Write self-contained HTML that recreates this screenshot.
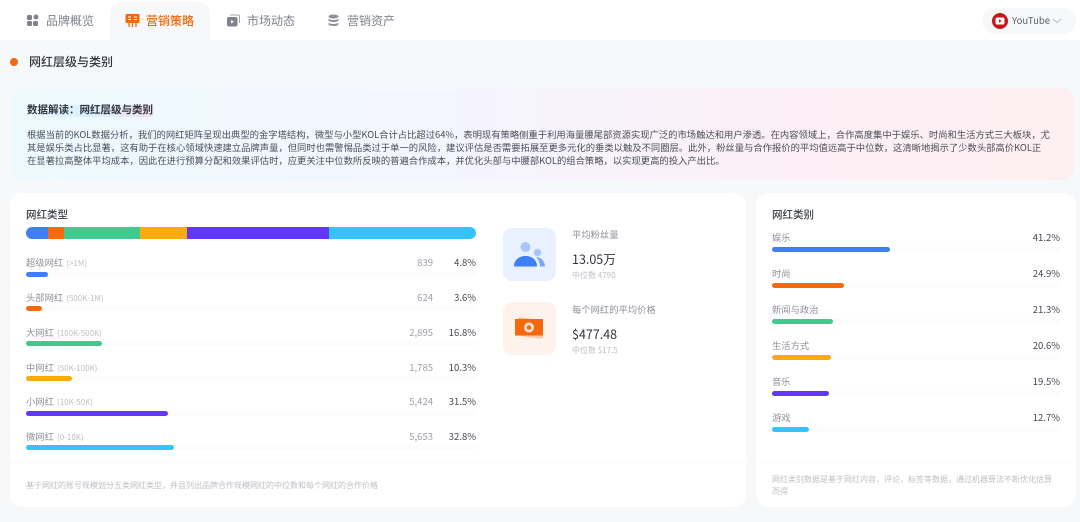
<!DOCTYPE html>
<html lang="zh"><head><meta charset="utf-8"><title>网红层级与类别</title>
<style>
*{box-sizing:border-box;margin:0;padding:0}
html,body{width:1080px;height:522px;overflow:hidden;background:#f7f8fa}
body{position:relative;font-family:"Noto Sans CJK SC","Liberation Sans",sans-serif;color:#3b3f4a;filter:blur(.3px)}
.a{position:absolute;white-space:nowrap;line-height:1}
.top{position:absolute;left:0;top:0;width:1080px;height:40px;background:#fff}
.tab{font-size:12px;color:#7d828c;top:15px}
.card{position:absolute;top:193px;height:314px;background:#fff;border-radius:12px}
.bar{position:absolute;height:5px;border-radius:3px}
.track{position:absolute;height:5px;background:#fbfcfd;border-radius:3px}
.lb{font-size:9.300px;color:#8d9199}
.lb small{font-size:8px;color:#bcbfc5;margin-left:1px}
.n{font-size:9.500px;color:#9a9ea6;text-align:right;width:50px}
.p{font-size:9.500px;color:#43474f;text-align:right;width:50px}
.seg{position:absolute;height:12px}
.hl{font-size:10.500px;color:#3b3f47;font-weight:500}
.s1{font-size:9.300px;color:#8d9199}
.s2{font-size:12.500px;color:#2f333b}
.s3{font-size:8px;color:#bcbfc5}
.foot{font-size:8px;color:#bdc0c5}
.t{font-size:9.320px;color:#4a4e57}
</style></head><body>
<div class="top"></div>
<div class="a" style="left:110px;top:2px;width:100px;height:38px;background:#f7f8fa;border-radius:12px 12px 0 0"></div>
<svg class="a" style="left:26px;top:14px" width="13" height="13" viewBox="0 0 13 13" fill="#7d828c"><rect x="1" y="1" width="5" height="5" rx="1.500"/><rect x="7.500" y="0.500" width="5" height="5" rx="2.500"/><rect x="1" y="7" width="5" height="5" rx="1.500"/><rect x="7" y="7" width="5" height="5" rx="1.500"/></svg>
<div class="a tab" style="left:46px">品牌概览</div>
<svg class="a" style="left:125px;top:13px" width="15" height="15" viewBox="0 0 15 15"><path d="M2 1h11a1.500 1.500 0 0 1 1.500 1.500v6A1.500 1.500 0 0 1 13 10H2A1.500 1.500 0 0 1 .5 8.500v-6A1.500 1.500 0 0 1 2 1z" fill="#f26a0f"/><path d="M3 4h3M9 4h3M3 6.500h3M9 6.500h3" stroke="#fff" stroke-width="1"/><path d="M4 10v4M7.500 10v4M11 10v4" stroke="#f26a0f" stroke-width="1.300"/></svg>
<div class="a tab" style="left:146px;color:#f06a0c;font-weight:500">营销策略</div>
<svg class="a" style="left:226px;top:14px" width="14" height="13" viewBox="0 0 14 13"><path d="M4 1h8a1.500 1.500 0 0 1 1.500 1.500V9" fill="none" stroke="#a3a6ad" stroke-width="1"/><rect x="1" y="3" width="10.500" height="9.500" rx="2" fill="#7d828c"/><path d="M5 6l3 1.800L5 9.500z" fill="#fff"/></svg>
<div class="a tab" style="left:247px">市场动态</div>
<svg class="a" style="left:327px;top:14px" width="13" height="13" viewBox="0 0 13 13" fill="#8d9098"><ellipse cx="6.500" cy="2.500" rx="5" ry="2"/><path d="M1.500 4.500c1 2 9 2 10 0v2c-1 2-9 2-10 0zM1.500 8.500c1 2 9 2 10 0v2c-1 2-9 2-10 0z"/></svg>
<div class="a tab" style="left:347px">营销资产</div>
<div class="a" style="left:982px;top:8px;width:94px;height:26px;background:#f7f8fa;border-radius:13px"></div>
<svg class="a" style="left:992px;top:13px" width="16" height="16" viewBox="0 0 16 16"><circle cx="8" cy="8" r="8" fill="#c4161c"/><rect x="3.500" y="4.500" width="9" height="7" rx="1.800" fill="#fff"/><path d="M7 6.300l2.800 1.700L7 9.700z" fill="#c4161c"/></svg>
<div class="a" style="left:1012px;top:16px;font-size:9.500px;color:#5a5e67">YouTube</div>
<svg class="a" style="left:1052px;top:18px" width="10" height="6" viewBox="0 0 10 6"><path d="M1 1l4 3.500L9 1" fill="none" stroke="#b5b8be" stroke-width="1"/></svg>

<div class="a" style="left:10px;top:58px;width:8px;height:8px;border-radius:50%;background:#f26a0f"></div>
<div class="a" style="left:29px;top:56px;font-size:12px;font-weight:500;color:#33363d">网红层级与类别</div>

<div class="a" style="left:12px;top:88px;width:1062px;height:92px;border-radius:12px;background:linear-gradient(90deg,#ecfafe 0%,#f4f5ff 40%,#fcf0f7 70%,#fdeff1 100%)"></div>
<div class="a" style="left:27px;top:104.500px;font-size:10.500px;font-weight:700;color:#33363d;height:12px;background:linear-gradient(90deg,rgba(120,200,255,0),rgba(120,200,255,.18) 50%,rgba(255,170,190,.3))">数据解读：网红层级与类别</div>
<div class="a t" style="left:27px;top:129.500px">根据当前的KOL数据分析，我们的网红矩阵呈现出典型的金字塔结构，微型与小型KOL合计占比超过64%，表明现有策略侧重于利用海量腰尾部资源实现广泛的市场触达和用户渗透。在内容领域上，合作高度集中于娱乐、时尚和生活方式三大板块，尤</div>
<div class="a t" style="left:27px;top:142.800px">其是娱乐类占比显著，这有助于在核心领域快速建立品牌声量，但同时也需警惕品类过于单一的风险，建议评估是否需要拓展至更多元化的垂类以触及不同圈层。此外，粉丝量与合作报价的平均值远高于中位数，这清晰地揭示了少数头部高价KOL正</div>
<div class="a t" style="left:27px;top:156px">在显著拉高整体平均成本，因此在进行预算分配和效果评估时，应更关注中位数所反映的普遍合作成本，并优化头部与中腰部KOL的组合策略，以实现更高的投入产出比。</div>

<div class="card" style="left:10px;width:736px"></div>
<div class="card" style="left:756px;width:320px"></div>

<div class="a hl" style="left:26px;top:210px">网红类型</div>
<div class="a" style="left:26px;top:227px;width:450px;height:12px;border-radius:6px;overflow:hidden">
<div class="seg" style="top:0;left:0;width:22px;background:#3f7ff6"></div>
<div class="seg" style="top:0;left:22px;width:16px;background:#f8690a"></div>
<div class="seg" style="top:0;left:38px;width:76px;background:#3ecb8d"></div>
<div class="seg" style="top:0;left:114px;width:47px;background:#fdab0a"></div>
<div class="seg" style="top:0;left:161px;width:142px;background:#6236fb"></div>
<div class="seg" style="top:0;left:303px;width:147px;background:#36c3fd"></div>
</div>

<div class="a lb" style="left:26px;top:258px">超级网红 <small>(&gt;1M)</small></div><div class="a n" style="left:383px;top:258px">839</div><div class="a p" style="left:426px;top:258px">4.8%</div>
<div class="track" style="left:26px;top:272px;width:450px"></div><div class="bar" style="left:26px;top:272px;width:21.500px;background:#3f7ff6"></div>
<div class="a lb" style="left:26px;top:293px">头部网红 <small>(500K-1M)</small></div><div class="a n" style="left:383px;top:293px">624</div><div class="a p" style="left:426px;top:293px">3.6%</div>
<div class="track" style="left:26px;top:306px;width:450px"></div><div class="bar" style="left:26px;top:306px;width:16px;background:#f8690a"></div>
<div class="a lb" style="left:26px;top:328px">大网红 <small>(100K-500K)</small></div><div class="a n" style="left:383px;top:328px">2,895</div><div class="a p" style="left:426px;top:328px">16.8%</div>
<div class="track" style="left:26px;top:341px;width:450px"></div><div class="bar" style="left:26px;top:341px;width:75.500px;background:#3ecb8d"></div>
<div class="a lb" style="left:26px;top:362.500px">中网红 <small>(50K-100K)</small></div><div class="a n" style="left:383px;top:362.500px">1,785</div><div class="a p" style="left:426px;top:362.500px">10.3%</div>
<div class="track" style="left:26px;top:376px;width:450px"></div><div class="bar" style="left:26px;top:376px;width:46px;background:#fdab0a"></div>
<div class="a lb" style="left:26px;top:397px">小网红 <small>(10K-50K)</small></div><div class="a n" style="left:383px;top:397px">5,424</div><div class="a p" style="left:426px;top:397px">31.5%</div>
<div class="track" style="left:26px;top:410.500px;width:450px"></div><div class="bar" style="left:26px;top:410.500px;width:142px;background:#6236fb"></div>
<div class="a lb" style="left:26px;top:432px">微网红 <small>(0-10K)</small></div><div class="a n" style="left:383px;top:432px">5,653</div><div class="a p" style="left:426px;top:432px">32.8%</div>
<div class="track" style="left:26px;top:445px;width:450px"></div><div class="bar" style="left:26px;top:445px;width:147.500px;background:#36c3fd"></div>

<div class="a" style="left:10px;top:462px;width:736px;height:1px;background:#f8f9fa"></div>
<div class="a foot" style="left:26px;top:481.500px">基于网红的账号规模划分五类网红类型，并且列出品牌合作规模网红的中位数和每个网红的合作价格</div>

<div class="a" style="left:503px;top:228px;width:53px;height:53px;border-radius:9px;background:#eaf1fe"></div>
<svg class="a" style="left:503px;top:228px" width="53" height="53" viewBox="0 0 53 53"><circle cx="22.500" cy="19" r="5" fill="#a9c6fb"/><circle cx="34.500" cy="24.500" r="3.800" fill="#a9c6fb"/><path d="M11 38.500c0-6.500 5-10.500 11.500-10.500S34 32 34 38.500z" fill="#3f7ff6"/><path d="M33 29c5 0 9 4 9 9.500h-5c0-3.500-1.500-7-4-9.500z" fill="#7ba6f8"/></svg>
<div class="a s1" style="left:572px;top:230px">平均粉丝量</div>
<div class="a s2" style="left:572px;top:252.500px">13.05万</div>
<div class="a s3" style="left:572px;top:272px">中位数 4790</div>

<div class="a" style="left:503px;top:302px;width:53px;height:53px;border-radius:9px;background:#fef3ec"></div>
<svg class="a" style="left:503px;top:302px" width="53" height="53" viewBox="0 0 53 53"><path d="M15 15l25 3v18l-5 .500-22-3z" fill="#fbc8a6"/><rect x="12" y="17" width="28" height="16.500" fill="#f4690c"/><circle cx="26" cy="25.500" r="5" fill="#fde4d3"/><circle cx="26" cy="25.500" r="2.300" fill="#f4690c"/></svg>
<div class="a s1" style="left:572px;top:305px">每个网红的平均价格</div>
<div class="a s2" style="left:572px;top:327.500px">$477.48</div>
<div class="a s3" style="left:572px;top:347px">中位数 $17.5</div>

<div class="a hl" style="left:772px;top:210px">网红类别</div>
<div class="a lb" style="left:772px;top:233px">娱乐</div><div class="a p" style="left:1010px;top:233px">41.2%</div>
<div class="track" style="left:772px;top:247px;width:288px"></div><div class="bar" style="left:772px;top:247px;width:118px;background:#3f7ff6"></div>
<div class="a lb" style="left:772px;top:269px">时尚</div><div class="a p" style="left:1010px;top:269px">24.9%</div>
<div class="track" style="left:772px;top:283px;width:288px"></div><div class="bar" style="left:772px;top:283px;width:72px;background:#f8690a"></div>
<div class="a lb" style="left:772px;top:305px">新闻与政治</div><div class="a p" style="left:1010px;top:305px">21.3%</div>
<div class="track" style="left:772px;top:319px;width:288px"></div><div class="bar" style="left:772px;top:319px;width:61px;background:#3ecb8d"></div>
<div class="a lb" style="left:772px;top:341px">生活方式</div><div class="a p" style="left:1010px;top:341px">20.6%</div>
<div class="track" style="left:772px;top:355px;width:288px"></div><div class="bar" style="left:772px;top:355px;width:59px;background:#fdab0a"></div>
<div class="a lb" style="left:772px;top:377px">音乐</div><div class="a p" style="left:1010px;top:377px">19.5%</div>
<div class="track" style="left:772px;top:391px;width:288px"></div><div class="bar" style="left:772px;top:391px;width:56.500px;background:#6236fb"></div>
<div class="a lb" style="left:772px;top:413px">游戏</div><div class="a p" style="left:1010px;top:413px">12.7%</div>
<div class="track" style="left:772px;top:427px;width:288px"></div><div class="bar" style="left:772px;top:427px;width:36.500px;background:#36c3fd"></div>

<div class="a" style="left:756px;top:462px;width:320px;height:1px;background:#f8f9fa"></div>
<div class="a foot" style="left:772px;top:476px">网红类别数据是基于网红内容，评论，标签等数据，通过机器算法不断优化估算</div>
<div class="a foot" style="left:772px;top:488px">而得</div>
</body></html>
